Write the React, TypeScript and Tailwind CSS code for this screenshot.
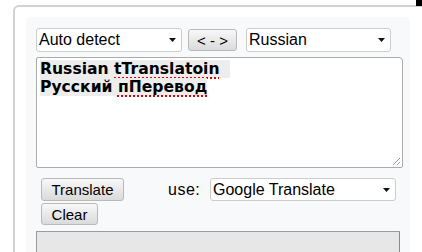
import React from "react";

const Arrow = () => (
  <svg width="7" height="4" viewBox="0 0 7 4" className="absolute right-[5px] top-1/2 -translate-y-1/2">
    <path d="M0 0H7L3.5 4Z" fill="#111" />
  </svg>
);

function Sel({ label, cls }: { label: string; cls: string }) {
  return (
    <div
      className={`relative flex items-center bg-white border border-[#cdcdcd] rounded-[3px] pl-[2px] text-[16px] text-black ${cls}`}
      style={{ fontFamily: '"Liberation Sans", Arial, sans-serif' }}
    >
      <span className="leading-none">{label}</span>
      <Arrow />
    </div>
  );
}

function Btn({ label, cls }: { label: string; cls: string }) {
  return (
    <div
      className={`flex items-center justify-center border border-[#b9b9b9] rounded-[3px] bg-gradient-to-b from-[#f8f8f8] to-[#dadada] text-[15px] text-black leading-none ${cls}`}
      style={{ fontFamily: '"Liberation Sans", Arial, sans-serif' }}
    >
      {label}
    </div>
  );
}

export default function App() {
  return (
    <div className="relative w-[422px] h-[252px] overflow-hidden bg-white pt-[5px] pl-[13px]">
      <div className="absolute right-0 top-0 w-[6px] h-[6px] bg-black" />
      <div className="h-[260px] border-l-2 border-t-2 border-[#d2d2d2] rounded-tl-[6px] pl-[11px] pt-[10px]">
        <div className="w-[384px] h-[260px] bg-[#f8f9fb] rounded-[4px] pl-[10px] pt-[11px]">
          <div className="flex items-start">
            <Sel label="Auto detect" cls="w-[146px] h-[24px]" />
            <Btn label="< - >" cls="ml-[6px] mt-[1px] w-[49px] h-[22px]" />
            <Sel label="Russian" cls="ml-[9px] w-[145px] h-[24px]" />
          </div>
          <div className="relative mt-[5px] w-[367px] h-[111px] bg-white border border-[#ababab] rounded-[2px] rounded-tr-[4px] pl-[3px] pt-[2px]">
            <div
              className="text-[15.6px] font-bold leading-[18px] text-black"
              style={{ fontFamily: '"DejaVu Sans", Verdana, sans-serif' }}
            >
              <div>
                <span className="bg-[#ededed] pr-[10px]">
                  Russian{" "}
                  <span className="underline decoration-dotted decoration-2 decoration-[#e00000] underline-offset-[3px]">
                    tTranslatoin
                  </span>
                </span>
              </div>
              <div>
                <span className="bg-[#ededed]">
                  Русский{" "}
                  <span className="underline decoration-dotted decoration-2 decoration-[#e00000] underline-offset-[3px]">
                    пПеревод
                  </span>
                </span>
              </div>
            </div>
            <svg width="9" height="9" viewBox="0 0 9 9" className="absolute right-[1px] bottom-[1px]">
              <path d="M8 1L1 8M8 5L5 8" stroke="#9a9a9a" strokeWidth="1" />
            </svg>
          </div>
          <div className="mt-[10px] pl-[5px] flex items-center">
            <Btn label="Translate" cls="w-[83px] h-[23px]" />
            <span
              className="ml-[44px] w-[34px] text-[16px] text-black leading-none tracking-[0.5px]"
              style={{ fontFamily: '"Liberation Sans", Arial, sans-serif' }}
            >
              use:
            </span>
            <Sel label="Google Translate" cls="ml-[8px] w-[186px] h-[23px]" />
          </div>
          <div className="mt-[2px] pl-[5px]">
            <Btn label="Clear" cls="w-[57px] h-[22px]" />
          </div>
          <div className="mt-[6px] w-[364px] h-[40px] bg-[#e7e7e7] border border-[#9c9c9c] border-r-[#8a8a8a]" />
        </div>
      </div>
    </div>
  );
}
